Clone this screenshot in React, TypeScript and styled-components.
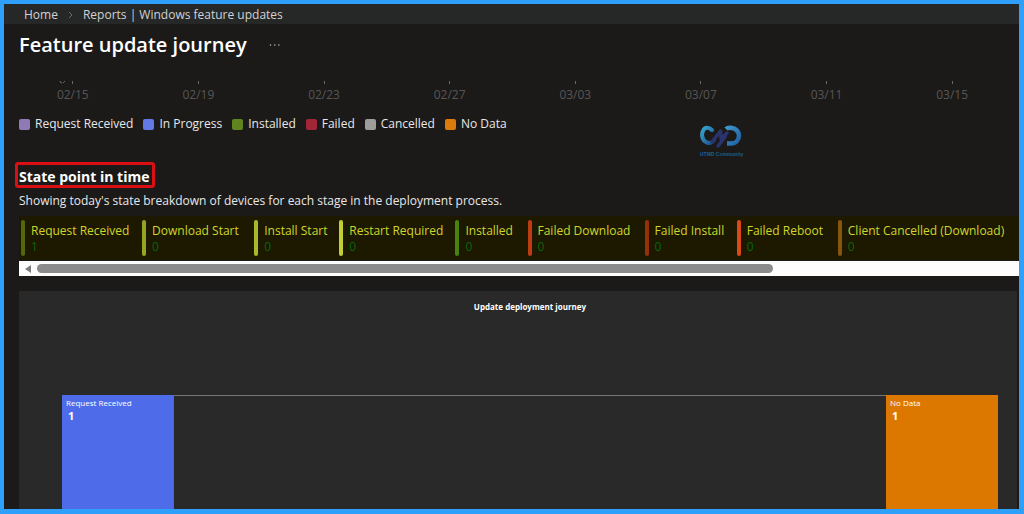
import React from "react";
import styled, { createGlobalStyle } from "styled-components";

const GlobalStyle = createGlobalStyle`
  *, *::before, *::after { box-sizing: border-box; }
  body {
    margin: 0;
    background: #1b1a19;
    color: #e8e8e8;
    font-family: "Open Sans", "Noto Sans", sans-serif;
    font-size: 12px;
    line-height: 16px;
  }
  h1, h2, h3, p, ul, ol, dl, dd, figure { margin: 0; padding: 0; }
  ul, ol { list-style: none; }
`;

const Frame = styled.div`
  height: 100vh;
  display: flex;
  flex-direction: column;
  overflow: hidden;
  border: solid #2e9ffb;
  border-width: 4px 5px 5px 4px;
  background: #1b1a19;
`;

const Breadcrumb = styled.nav`
  flex: none;
  height: 20px;
  background: #262727;
  padding: 3px 20px 1px;
  display: flex;
  align-items: center;
  gap: 10px;
`;

const Crumb = styled.a`
  color: #d2d2d2;
  text-decoration: none;
`;

const TitleRow = styled.header`
  flex: none;
  display: flex;
  align-items: center;
  gap: 18px;
  height: 41px;
  padding: 0 15px;
`;

const Title = styled.h1`
  color: #fff;
  font-size: 20px;
  line-height: 28px;
  font-weight: 600;
`;

const MoreButton = styled.button`
  display: flex;
  border: 0;
  padding: 4px;
  background: none;
  color: #b5b5b5;
`;

const Axis = styled.ol`
  flex: none;
  display: grid;
  grid-template-columns: repeat(8, 1fr);
  margin-top: 16px;
  padding: 0 4px 0 6px;
`;

const AxisTick = styled.li`
  display: flex;
  flex-direction: column;
  align-items: center;
  gap: 3px;
  color: #575655;
`;

const LegendRow = styled.div`
  flex: none;
  display: grid;
  grid-template-columns: 681fr 319fr;
  align-items: start;
  height: 59px;
  padding: 13px 0 0 15px;
`;

const Legend = styled.ul`
  display: flex;
  gap: 10px;
`;

const LegendItem = styled.li`
  display: flex;
  align-items: center;
  gap: 5px;
  white-space: nowrap;
`;

const Swatch = styled.span<{ $color: string }>`
  width: 11px;
  height: 11px;
  border-radius: 2px;
  background: ${(p) => p.$color};
`;

const Logo = styled.svg`
  display: block;
  margin-top: 9px;
`;

const Section = styled.section`
  flex: 1;
  min-height: 0;
  display: flex;
  flex-direction: column;
  padding-left: 15px;
`;

const SectionTitle = styled.h2`
  align-self: flex-start;
  margin-left: -4px;
  padding: 4px 3px 0 1px;
  border: 3px solid #d90f13;
  border-radius: 3px;
  color: #fff;
  font-size: 14px;
  line-height: 16px;
  font-weight: 700;
`;

const Description = styled.p`
  margin-top: 5px;
`;

const StateList = styled.dl`
  flex: none;
  display: grid;
  grid-template-columns: 121fr 112fr 85fr 116fr 72fr 117fr 92fr 101fr 181fr;
  margin-top: 7px;
  padding: 4px 0 4px 2px;
  background: #1c1900;
`;

const StateCard = styled.div<{ $color: string }>`
  position: relative;
  height: 36px;
  padding: 3px 0 0 10px;
  white-space: nowrap;

  &::before {
    content: "";
    position: absolute;
    inset: 0 auto 0 0;
    width: 4px;
    border-radius: 2px;
    background: ${(p) => p.$color};
  }
`;

const StateName = styled.dt`
  color: #d0d62d;
`;

const StateCount = styled.dd`
  color: #07660c;
`;

const ScrollTrack = styled.div`
  flex: none;
  display: flex;
  align-items: center;
  gap: 6px;
  height: 15px;
  margin-top: 1px;
  padding-left: 6px;
  background: #fdfdfd;
`;

const ScrollThumb = styled.div`
  width: 74%;
  height: 9px;
  border-radius: 5px;
  background: #8b8b8b;
`;

const Chart = styled.figure`
  flex: 1;
  min-height: 0;
  display: flex;
  flex-direction: column;
  && {
    margin: 15px 2px 0 0;
  }
  background: #292929;
`;

const ChartTitle = styled.figcaption`
  padding: 8px 0 80px 24px;
  color: #fff;
  font-size: 8px;
  font-weight: 700;
  text-align: center;
`;

const Flow = styled.div`
  flex: 1;
  display: grid;
  grid-template-columns: 111fr 713fr 112fr;
  padding: 0 19px 0 43px;
`;

const Stage = styled.div<{ $color: string }>`
  padding: 0 4px;
  background: ${(p) => p.$color};
  color: #fff;
`;

const StageName = styled.div`
  font-size: 8px;
  line-height: 16px;
`;

const StageCount = styled.div`
  padding-left: 2px;
  font-size: 11px;
  line-height: 9px;
  font-weight: 700;
`;

const Link = styled.div`
  border-top: 1px solid #777475;
  border-left: 1px solid #6f6a62;
`;

const dates = ["02/15", "02/19", "02/23", "02/27", "03/03", "03/07", "03/11", "03/15"];

const legend = [
  { label: "Request Received", color: "#8f7ab5" },
  { label: "In Progress", color: "#6379e8" },
  { label: "Installed", color: "#5f8420" },
  { label: "Failed", color: "#a32638" },
  { label: "Cancelled", color: "#9d9c9b" },
  { label: "No Data", color: "#dc7a0c" },
];

const states = [
  { label: "Request Received", count: 1, color: "#56660b" },
  { label: "Download Start", count: 0, color: "#94a524" },
  { label: "Install Start", count: 0, color: "#a9b92b" },
  { label: "Restart Required", count: 0, color: "#c0cf35" },
  { label: "Installed", count: 0, color: "#48820f" },
  { label: "Failed Download", count: 0, color: "#bd3d12" },
  { label: "Failed Install", count: 0, color: "#973009" },
  { label: "Failed Reboot", count: 0, color: "#db481b" },
  { label: "Client Cancelled (Download)", count: 0, color: "#86560d" },
];

function TickMark({ first }: { first: boolean }) {
  return (
    <svg width="27" height="3" viewBox="0 0 27 3" fill="none" stroke="#6a6968" aria-hidden="true">
      <path d="M13.5 0V3" />
      {/* lower edge of the value axis label, cut off by the scrolled header */}
      {first && <path d="M1 0L2 2H3M4 2L6 0" />}
    </svg>
  );
}

function CommunityLogo() {
  return (
    <Logo width="44" height="33" viewBox="0 0 44 33" role="img" aria-label="HTMD Community">
      <defs>
        <linearGradient id="left" x1="0" y1="0" x2="1" y2="1">
          <stop offset="0" stopColor="#38a5cf" />
          <stop offset="1" stopColor="#1b4c8b" />
        </linearGradient>
        <linearGradient id="right" x1="0" y1="0" x2="1" y2="1">
          <stop offset="0" stopColor="#3f97c9" />
          <stop offset="1" stopColor="#2061a5" />
        </linearGradient>
      </defs>
      <g fill="none" strokeLinecap="round" strokeLinejoin="round">
        <path d="M12 5C9 2 5 2 3.500 5C1 9 2 15 6 17C9 19 12 18 14 15" stroke="url(#left)" strokeWidth="4" />
        <path d="M26 4C28 2 30 2.500 32 3C36 3.500 39 7 39 10.500C39 15 36 18.500 31 18.500H27" stroke="url(#right)" strokeWidth="4.500" strokeLinecap="butt" />
        <path d="M12 17L20.500 6L21 14L27 8M25 12L18 21" stroke="#29346f" strokeWidth="3.500" />
      </g>
      <text x="0" y="31" fontFamily="Liberation Sans" fontSize="5" fontWeight="700" fill="#195e8c">HTMD Community</text>
    </Logo>
  );
}

export default function App() {
  return (
    <>
      <GlobalStyle />
      <Frame>
        <Breadcrumb aria-label="Breadcrumb">
          <Crumb href="#home">Home</Crumb>
          <svg width="5" height="8" viewBox="0 0 5 8" fill="none" stroke="#6d6d6d" aria-hidden="true">
            <path d="M1 1L4 4L1 7" />
          </svg>
          <Crumb href="#reports">Reports | Windows feature updates</Crumb>
        </Breadcrumb>
        <TitleRow>
          <Title>Feature update journey</Title>
          <MoreButton type="button" aria-label="More">
            <svg width="12" height="2" viewBox="0 0 12 2" fill="currentColor" aria-hidden="true">
              <circle cx="1.5" cy="1" r="0.8" />
              <circle cx="5.7" cy="1" r="0.8" />
              <circle cx="9.9" cy="1" r="0.8" />
            </svg>
          </MoreButton>
        </TitleRow>
        <Axis>
          {dates.map((date, i) => (
            <AxisTick key={date}>
              <TickMark first={i === 0} />
              {date}
            </AxisTick>
          ))}
        </Axis>
        <LegendRow>
          <Legend>
            {legend.map((item) => (
              <LegendItem key={item.label}>
                <Swatch $color={item.color} />
                {item.label}
              </LegendItem>
            ))}
          </Legend>
          <CommunityLogo />
        </LegendRow>
        <Section>
          <SectionTitle>State point in time</SectionTitle>
          <Description>
            Showing today's state breakdown of devices for each stage in the deployment process.
          </Description>
          <StateList>
            {states.map((state) => (
              <StateCard key={state.label} $color={state.color}>
                <StateName>{state.label}</StateName>
                <StateCount>{state.count}</StateCount>
              </StateCard>
            ))}
          </StateList>
          <ScrollTrack>
            <svg width="6" height="8" viewBox="0 0 6 8" fill="#7d7d7d" aria-hidden="true">
              <path d="M6 0V8L0 4Z" />
            </svg>
            <ScrollThumb />
          </ScrollTrack>
          <Chart>
            <ChartTitle>Update deployment journey</ChartTitle>
            <Flow>
              <Stage $color="#4e6cea">
                <StageName>Request Received</StageName>
                <StageCount>1</StageCount>
              </Stage>
              <Link />
              <Stage $color="#dc7700">
                <StageName>No Data</StageName>
                <StageCount>1</StageCount>
              </Stage>
            </Flow>
          </Chart>
        </Section>
      </Frame>
    </>
  );
}
